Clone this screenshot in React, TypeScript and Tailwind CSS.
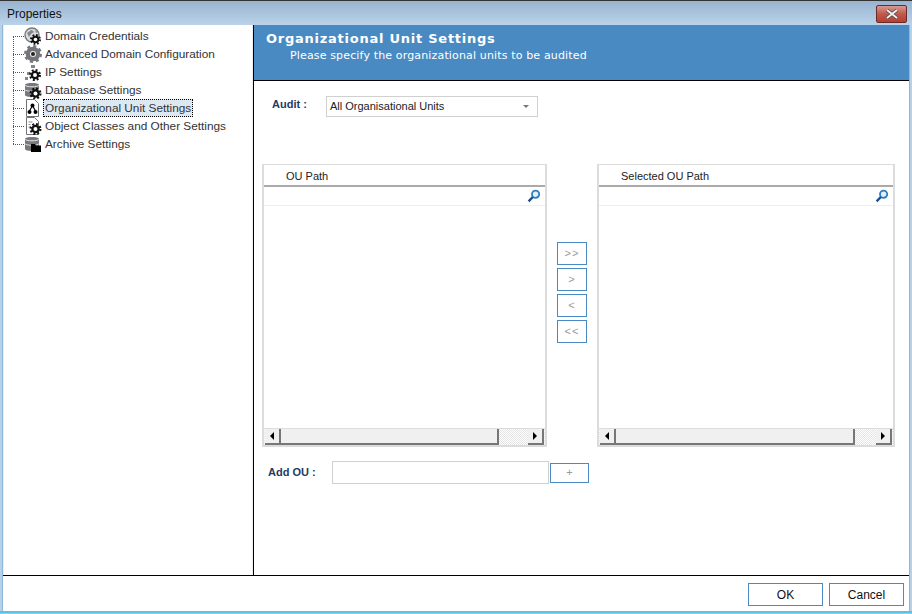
import type { ReactNode } from "react";

const uiFont = "font-['Liberation_Sans',Arial,sans-serif]";
const wideFont = "font-['DejaVu_Sans',sans-serif]";

// small gear, teeth come from a dashed stroke
const Gear = ({ cx, cy, r, color = "#111", hole = "#fff" }: { cx: number; cy: number; r: number; color?: string; hole?: string }) => {
  const outer = r - 0.6;
  const tooth = (2 * Math.PI * outer) / 16;
  return (
    <g>
      <circle cx={cx} cy={cy} r={outer} fill="none" stroke={color} strokeWidth={2.2} strokeDasharray={`${tooth} ${tooth}`} />
      <circle cx={cx} cy={cy} r={r - 1.2} fill={color} />
      <circle cx={cx} cy={cy} r={r * 0.36} fill={hole} />
    </g>
  );
};

const Cylinder = () => (
  <g>
    <path d="M1 4c0-2.6 14-2.6 14 0v10c0 2.6-14 2.6-14 0z" fill="#77797c" />
    <path d="M1 4c0 2.4 14 2.4 14 0M1 8.5c0 2.4 14 2.4 14 0" fill="none" stroke="#e4e4e4" strokeWidth={1} />
  </g>
);

const Doc = () => <path d="M2.5 .5h8l4 4v13h-12z" fill="#fff" stroke="#6f7275" />;

const treeIcons: Record<string, ReactNode> = {
  domain: (
    <>
      <circle cx={8} cy={8} r={7} fill="#d9dcdf" stroke="#77797c" strokeWidth={1.4} />
      <path d="M3 6c2-1 3-3 5-3l2 2-3 2-2 3zM11 3l3 2-2 1z" fill="#85888b" />
      <Gear cx={11.5} cy={12.5} r={5} />
    </>
  ),
  advanced: (
    <>
      <Gear cx={9} cy={9} r={8.5} color="#737578" hole="#e9e9e9" />
      <circle cx={9} cy={9} r={2} fill="#222" />
    </>
  ),
  ip: (
    <>
      <path d="M7 2h4v3H7zM3 9h3v3H3zM1 14h3v3H1z" fill="#85888b" />
      <Gear cx={11} cy={12} r={5.5} />
    </>
  ),
  database: (
    <>
      <Cylinder />
      <Gear cx={11.5} cy={12.5} r={5.5} />
    </>
  ),
  ou: (
    <>
      <Doc />
      <path d="M8.5 6.5 5.5 12M8.5 6.5l3 5.5" stroke="#000" strokeWidth={1.2} />
      <circle cx={8.5} cy={6.5} r={2} fill="#000" />
      <circle cx={5.5} cy={13} r={2} fill="#000" />
      <circle cx={11.5} cy={13} r={2} fill="#000" />
    </>
  ),
  object: (
    <>
      <Doc />
      <path d="M4.5 5h4M4.5 7.5h2M4.5 10h2" stroke="#8a8a8a" />
      <Gear cx={11.5} cy={12} r={5.5} />
    </>
  ),
  archive: (
    <>
      <Cylinder />
      <path d="M7 9h4l1 1.5h5V17H7z" fill="#000" />
    </>
  ),
};

const tree = [
  { label: "Domain Credentials", icon: "domain" },
  { label: "Advanced Domain Configuration", icon: "advanced" },
  { label: "IP Settings", icon: "ip" },
  { label: "Database Settings", icon: "database" },
  { label: "Organizational Unit Settings", icon: "ou", selected: true },
  { label: "Object Classes and Other Settings", icon: "object" },
  { label: "Archive Settings", icon: "archive" },
];

const TreeRow = ({ label, icon, selected }: { label: string; icon: string; selected?: boolean }) => (
  <div className="flex h-[18px] items-center pl-[9px]">
    <span className="w-[11px] border-t border-dotted border-[#555]" />
    <svg viewBox="0 0 18 18" className="h-[18px] w-[18px] shrink-0">
      {treeIcons[icon]}
    </svg>
    <span
      className={`ml-px flex h-[18px] items-center whitespace-nowrap border border-dotted px-px text-[11.8px] leading-[14px] text-[#333] ${
        selected ? "border-black bg-[#dce9f3]" : "border-transparent"
      }`}
    >
      {label}
    </span>
  </div>
);

const SearchIcon = () => (
  <svg viewBox="0 0 14 14" className="h-[14px] w-[14px]">
    <circle cx={8.6} cy={5.2} r={3.6} fill="#dff0fb" stroke="#2f7cc0" strokeWidth={1.8} />
    <path d="M5.8 8 1.6 12.4" stroke="#1d4f8c" strokeWidth={2.4} />
  </svg>
);

const ScrollButton = ({ left }: { left?: boolean }) => (
  <div className="flex h-[16px] w-[16px] shrink-0 items-center justify-center border-b-2 border-r-2 border-b-[#777] border-r-[#777] bg-[#f0f0f0]">
    <svg viewBox="0 0 4 8" className="h-[8px] w-[4px]">
      <path d={left ? "M4 0v8L0 4z" : "M0 0v8l4-4z"} fill="#000" />
    </svg>
  </div>
);

const ScrollBar = ({ thumb }: { thumb: string }) => (
  <div className="flex h-[17px] shrink-0 items-stretch border-t border-[#dcdcdc] bg-[repeating-conic-gradient(#e4e4e4_0%_25%,#fff_0%_50%)] bg-[length:2px_2px] pl-px pr-px">
    <ScrollButton left />
    <div className={`${thumb} border-b-2 border-r-2 border-b-[#777] border-r-[#777] bg-[#f0f0f0]`} />
    <div className="flex-1" />
    <ScrollButton />
  </div>
);

const ListPanel = ({ title, width, thumb }: { title: string; width: string; thumb: string }) => (
  <div className={`flex h-[283px] ${width} flex-col border-x-2 border-b-2 border-t border-[#dcdcdc] bg-white`}>
    <div className="flex h-[22px] shrink-0 items-center border-b-2 border-[#aaa] pl-[22px] pt-[2px] text-[11px] text-[#222]">{title}</div>
    <div className="flex h-[19px] shrink-0 items-center justify-end border-b border-[#eee] pr-[4px]">
      <SearchIcon />
    </div>
    <div className="flex-1" />
    <ScrollBar thumb={thumb} />
  </div>
);

const MoveButton = ({ glyph }: { glyph: string }) => (
  <button className="flex h-[23px] w-[30px] items-center justify-center border border-[#4a8ac2] bg-white text-[11px] tracking-[1px] text-[#999]">
    {glyph}
  </button>
);

const DialogButton = ({ children }: { children: string }) => (
  <button className="h-[23px] w-[75px] border border-[#4a8ac2] bg-white pt-[1px] text-[12px] text-[#111]">{children}</button>
);

export default function App() {
  return (
    <div className={`${uiFont} flex h-[614px] w-[912px] flex-col overflow-hidden border-t border-[#333] bg-[#b7d1e9]`}>
      {/* Title bar */}
      <div className="flex h-[24px] shrink-0 justify-between bg-gradient-to-b from-[#9ab4d0] to-[#bad3ea] pl-[7px] pr-[5px]">
        <span className="pt-[6px] text-[12px] leading-[14px] text-[#111]">Properties</span>
        <button className="mt-[4px] flex h-[18px] w-[31px] items-center justify-center rounded-[2px] border border-[#6b2a2a] bg-gradient-to-b from-[#d99a90] via-[#c0594c] to-[#b5402f]">
          <svg viewBox="0 0 14 10" className="h-[10px] w-[14px]">
            <path d="M2 1l10 8M12 1 2 9" stroke="#444" strokeWidth={3.4} />
            <path d="M2 1l10 8M12 1 2 9" stroke="#f2f2f2" strokeWidth={2} />
          </svg>
        </button>
      </div>

      {/* Window body */}
      <div className="ml-[2px] mr-[2px] flex min-h-0 flex-1 flex-col border-x border-[#8fb6d8] bg-white">
        <div className="flex h-[551px] border-b border-black">
          {/* Tree */}
          <aside className="relative w-[250px] shrink-0 border-x border-[#eee] pt-[2px]">
            <div className="absolute left-[9px] top-[11px] h-[108px] border-l border-dotted border-[#555]" />
            {tree.map((item) => (
              <TreeRow key={item.label} {...item} />
            ))}
          </aside>

          {/* Settings pane */}
          <main className="flex min-w-0 flex-1 flex-col border-l border-black">
            <header className={`${wideFont} h-[56px] shrink-0 border-b border-black bg-[#4a8ac2] pl-[12px] pt-[6px] text-white`}>
              <h1 className="text-[13px] font-bold leading-[16px] tracking-[0.75px]">Organizational Unit Settings</h1>
              <p className="pl-[24px] text-[11px] leading-[17px] tracking-[0.15px]">Please specify the organizational units to be audited</p>
            </header>

            <div className="flex h-[36px] items-start pl-[18px] pt-[15px]">
              <label className="w-[54px] pt-[1px] text-[11px] leading-[14px] font-bold text-[#1f3a63]">Audit :</label>
              <div className="flex h-[21px] w-[212px] items-center justify-between border border-[#d0d0d0] pl-[3px] pr-[8px] text-[11px] text-[#222]">
                <span>All Organisational Units</span>
                <span className="h-0 w-0 border-l-[3px] border-r-[3px] border-t-[3px] border-l-transparent border-r-transparent border-t-[#777]" />
              </div>
            </div>

            <div className="ml-[8px] mt-[47px] flex items-start">
              <ListPanel title="OU Path" width="w-[285px]" thumb="w-[218px]" />
              <div className="ml-[10px] mt-[78px] flex w-[30px] flex-col gap-[3px]">
                <MoveButton glyph=">>" />
                <MoveButton glyph=">" />
                <MoveButton glyph="<" />
                <MoveButton glyph="<<" />
              </div>
              <div className="ml-[10px]">
                <ListPanel title="Selected OU Path" width="w-[298px]" thumb="w-[239px]" />
              </div>
            </div>

            <div className="ml-[14px] mt-[14px] flex items-center">
              <label className="w-[64px] pb-[1px] text-[11px] font-bold text-[#1f3a63]">Add OU :</label>
              <div className="h-[23px] w-[217px] border border-[#d0d0d0]" />
              <button className="ml-[1px] flex h-[20px] w-[39px] items-center justify-center border border-[#4a8ac2] text-[11px] text-[#999]">+</button>
            </div>
          </main>
        </div>

        {/* Footer */}
        <footer className="flex flex-1 items-start justify-end gap-[6px] pr-[5px] pt-[7px]">
          <DialogButton>OK</DialogButton>
          <DialogButton>Cancel</DialogButton>
        </footer>
      </div>
      <div className="h-[2px] shrink-0 bg-[#5cc3e6]" />
      <div className="h-px shrink-0 bg-[#9fc6e4]" />
    </div>
  );
}
